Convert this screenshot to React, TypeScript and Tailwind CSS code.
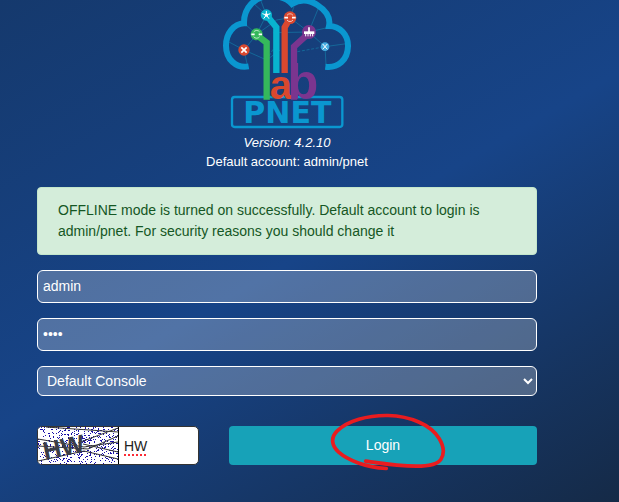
import React from "react";

const INK = "#0a97d0";

function Logo() {
  return (
    <svg role="img" aria-label="PNETLab" className="block h-[135px] w-[155px]" viewBox="0 0 465 405" fill="none">
      <g stroke="#14709f" strokeWidth="2.5">
        <path d="M55 125L102 150L140 103L98 66M140 103L169 45L150 -5M140 103L168 118M102 150L170 180L210 150M102 150L112 195M140 103L200 60L240 53L252 20M169 45L130 10M240 53L296 96L325 25M296 96L190 98M296 96L345 140L348 195M296 96L365 80M345 140L410 131" />
        <path d="M262 155L345 140M170 180L200 130" strokeDasharray="9 5" />
      </g>
      <path
        d="M116 199C78 206 48 178 48 137C48 99 72 72 102 70C101 24 135 -12 180 -12C214 -12 232 -4 246 12C268 -2 296 -2 321 14C349 32 362 55 357 78C389 78 415 104 414 139C413 180 384 205 346 200"
        stroke={INK}
        strokeWidth="18"
      />
      <rect x="66" y="291" width="331" height="90" rx="8" stroke={INK} strokeWidth="7" />
      <g strokeWidth="19">
        <path d="M143 107L170 128V299" stroke="#35b85b" />
        <path d="M172 49L199 82V219" stroke="#08b3cf" />
        <path d="M240 55L224 82V219" stroke="#d9482f" />
        <path d="M296 100L252 140V299" stroke="#7b358f" />
      </g>
      <circle cx="140" cy="103" r="18" fill="#35b85b" />
      <circle cx="169" cy="45" r="17" fill="#08b3cf" />
      <circle cx="240" cy="53" r="19" fill="#d9482f" />
      <circle cx="297" cy="96" r="21" fill="#7b358f" />
      <circle cx="102" cy="150" r="17" fill="#d9482f" />
      <circle cx="345" cy="140" r="13" fill="#45ace0" />
      <g stroke="#fff" strokeWidth="3">
        <g strokeWidth="2">
          <path d="M131 96A11 11 0 0 1 149 96M131 110A11 11 0 0 0 149 110" />
          <path d="M231 46A11 11 0 0 1 249 46M231 60A11 11 0 0 0 249 60" />
        </g>
        <path d="M124 103H134M146 103H156" strokeWidth="5" />
        <path d="M223 53H234M246 53H257" strokeWidth="5" />
        <path d="M169 45V33M169 45L157 41M169 45L181 41M169 45L161 56M169 45L177 56" />
        <path d="M94 142L110 158M110 142L94 158" strokeWidth="5" />
        <path d="M338 132L352 148M352 132L338 148" />
        <path d="M287 102V109M294 102V109M301 102V109M308 102V109" />
        <path d="M297 82V96" strokeWidth="5" />
        <path d="M282 98H313" strokeWidth="8" />
      </g>
      <circle cx="169" cy="45" r="5" fill="#fff" />
      <g className="font-['Liberation_Sans',sans-serif] font-bold">
        <text x="179" y="298" fontSize="120" fill="#d9482f">a</text>
        <text x="233" y="297" fontSize="150" fill="#7b358f">b</text>
      </g>
      <text x="232" y="368" textAnchor="middle" fontSize="90" fill={INK} className="font-['DejaVu_Sans',sans-serif] font-bold">
        PNET
      </text>
    </svg>
  );
}

function speckles() {
  let seed = 71;
  const next = () => {
    seed = (seed * 16807) % 2147483647;
    return seed / 2147483647;
  };
  let d = "";
  for (let i = 0; i < 520; i++) {
    d += `M${Math.floor(next() * 80)} ${Math.floor(next() * 37)}h1v1h-1z`;
  }
  return d;
}

function CaptchaImage() {
  return (
    <svg role="img" aria-label="Captcha" className="block h-[37px] w-20 shrink-0 bg-white" viewBox="0 0 80 37">
      <path d={speckles()} fill="#1a10a8" shapeRendering="crispEdges" />
      <path
        d="M8 0L80 5M0 12L46 20L80 15M0 19L50 22L80 9M40 16L80 1M0 34L46 24L80 32M45 17L80 25"
        stroke="#333"
        fill="none"
      />
      <text x="7" y="33" fontSize="25" fill="#3b3d47" transform="rotate(-12 7 33)" className="font-['Liberation_Sans',sans-serif] font-bold">
        HW
      </text>
    </svg>
  );
}

const field = "w-full rounded-md border border-white bg-white/25 text-sm text-white outline-none";

export default function App() {
  return (
    <main className="min-h-screen bg-[linear-gradient(150deg,#15396d_0%,#174488_50%,#152a47_100%)] pr-[82px] pl-[37px] font-['Liberation_Sans',Arial,sans-serif] text-sm text-white">
      <header className="flex flex-col items-center text-[13px]">
        <Logo />
        <p className="-mt-0.5 leading-[19px] italic">Version: 4.2.10</p>
        <p className="leading-[19px]">Default account: admin/pnet</p>
      </header>
      <div role="status" className="mt-4 rounded border border-[#c3e6cb] bg-[#d4edda] px-5 py-3 leading-[21px] text-[#155724]">
        OFFLINE mode is turned on successfully. Default account to login is admin/pnet. For security reasons you should change it
      </div>
      <form className="mt-[15px] flex flex-col gap-[15px]" onSubmit={(e) => e.preventDefault()}>
        <input aria-label="Username" type="text" defaultValue="admin" className={`${field} h-[33px] px-[5px] pb-0.5`} />
        <input aria-label="Password" type="password" defaultValue="pnet" className={`${field} h-[33px] px-[5px] pb-0.5`} />
        <select aria-label="Console" className={`${field} h-[30px] pl-[5px]`}>
          <option>Default Console</option>
        </select>
        <div className="mt-[15px] flex gap-[30px]">
          <div className="flex h-[39px] w-[162px] shrink-0 overflow-hidden rounded-[5px] border border-[#333] bg-white">
            <CaptchaImage />
            <input
              aria-label="Captcha text"
              type="text"
              defaultValue="HW"
              className="min-w-0 flex-1 border-l border-black px-[5px] text-[#222] underline decoration-red-500 decoration-dotted decoration-2 underline-offset-4 outline-none"
            />
          </div>
          <button type="submit" className="relative h-[39px] flex-1 rounded bg-[#17a2b8] pb-0.5 text-white">
            Login
            <svg
              aria-hidden="true"
              className="pointer-events-none absolute top-1/2 left-1/2 h-[73px] w-[130px] -translate-x-1/2 -translate-y-1/2"
              viewBox="294 27 390 219"
              fill="none"
            >
              <path
                d="M499 204C434 200 382 178 356 155C335 136 331 112 351 92C382 60 444 44 504 45C572 47 631 72 657 113C670 134 674 158 663 176C652 193 625 197 589 197C535 197 486 189 437 182"
                stroke="#e91c1f"
                strokeWidth="11"
                strokeLinecap="round"
                strokeLinejoin="round"
              />
            </svg>
          </button>
        </div>
      </form>
    </main>
  );
}
